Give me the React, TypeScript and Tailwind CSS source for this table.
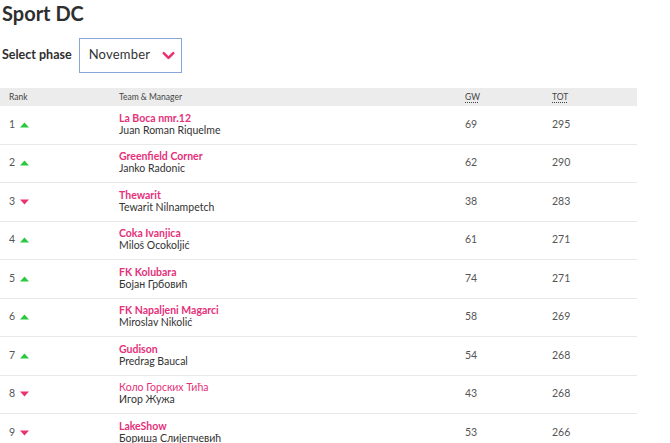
import { ChevronDown } from "lucide-react";

type Row = {
  rank: number;
  up: boolean;
  team: string;
  manager: string;
  gw: number;
  tot: number;
  light?: boolean;
};

const rows: Row[] = [
  { rank: 1, up: true, team: "La Boca nmr.12", manager: "Juan Roman Riquelme", gw: 69, tot: 295 },
  { rank: 2, up: true, team: "Greenfield Corner", manager: "Janko Radonic", gw: 62, tot: 290 },
  { rank: 3, up: false, team: "Thewarit", manager: "Tewarit Nilnampetch", gw: 38, tot: 283 },
  { rank: 4, up: true, team: "Coka Ivanjica", manager: "Miloš Ocokoljić", gw: 61, tot: 271 },
  { rank: 5, up: true, team: "FK Kolubara", manager: "Бојан Грбовић", gw: 74, tot: 271 },
  { rank: 6, up: true, team: "FK Napaljeni Magarci", manager: "Miroslav Nikolić", gw: 58, tot: 269 },
  { rank: 7, up: true, team: "Gudison", manager: "Predrag Baucal", gw: 54, tot: 268 },
  { rank: 8, up: false, team: "Коло Горских Тића", manager: "Игор Жужа", gw: 43, tot: 268, light: true },
  { rank: 9, up: false, team: "LakeShow", manager: "Бориша Слијепчевић", gw: 53, tot: 266 },
];

function Arrow({ up }: { up: boolean }) {
  return up ? (
    <svg width="9" height="6" viewBox="0 0 9 6" className="ml-[5px]">
      <path d="M0 5.5 L4.5 0.5 L9 5.5 Z" fill="#27c93f" />
    </svg>
  ) : (
    <svg width="9" height="6" viewBox="0 0 9 6" className="ml-[5px]">
      <path d="M0 0.5 L4.5 5.5 L9 0.5 Z" fill="#e8336f" />
    </svg>
  );
}

export default function App() {
  return (
    <div className="w-[670px] h-[443px] overflow-hidden bg-white text-[#333] font-['Lato',_'Noto_Sans',_sans-serif]">
      <h1 className="pl-[2px] pt-[1px] text-[20px] leading-[24px] font-bold text-[#2e2e2e]">Sport DC</h1>

      <div className="flex items-center mt-[12px] h-[36px]">
        <span className="pl-[2px] text-[12.5px] font-bold text-[#2e2e2e]">Select phase</span>
        <div className="ml-[7px] w-[103px] h-[35px] border border-[#86a6d8] flex items-center justify-between pl-[9px] pr-[3px]">
          <span className="text-[13px] text-[#333] tracking-[0.2px]">November</span>
          <ChevronDown className="w-[19px] h-[19px] text-[#ec2f72]" strokeWidth={3.2} />
        </div>
      </div>

      <div className="mt-[15px] w-[637px]">
        <div className="grid grid-cols-[110px_346px_87px_1fr] pl-[9px] h-[18px] items-center bg-[#ececec] text-[8.5px] text-[#444]">
          <span>Rank</span>
          <span>Team &amp; Manager</span>
          <span className="underline decoration-dotted underline-offset-2">GW</span>
          <span className="underline decoration-dotted underline-offset-2">TOT</span>
        </div>

        {rows.map((r) => (
          <div
            key={r.rank}
            className="grid grid-cols-[110px_346px_87px_1fr] pl-[9px] h-[38.5px] items-center border-b border-[#e8e8e8] text-[10.5px]"
          >
            <div className="flex items-center text-[#555]">
              <span>{r.rank}</span>
              <Arrow up={r.up} />
            </div>
            <div className="flex flex-col leading-[12px] -mt-[2px]">
              <span className={`text-[#e5317a] text-[10.5px] ${r.light ? "font-normal" : "font-bold"}`}>{r.team}</span>
              <span className="text-[#333]">{r.manager}</span>
            </div>
            <span className="text-[#555]">{r.gw}</span>
            <span className="text-[#555]">{r.tot}</span>
          </div>
        ))}
      </div>
    </div>
  );
}
